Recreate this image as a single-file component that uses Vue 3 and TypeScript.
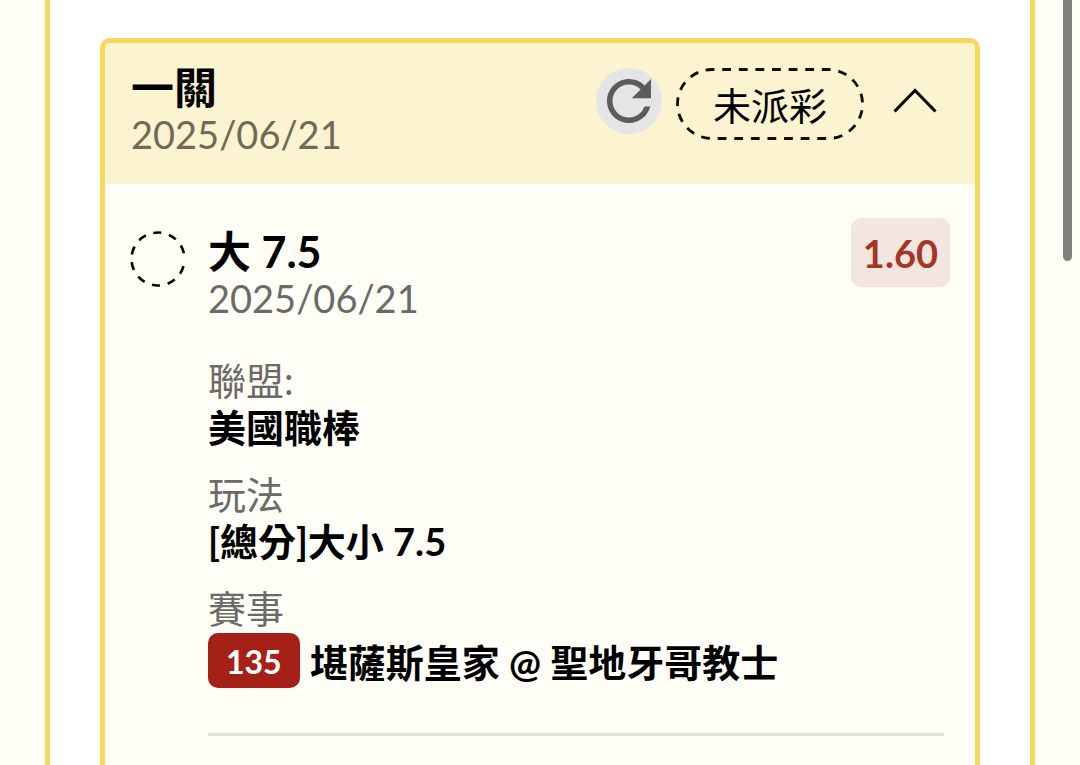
<script setup lang="ts">
import { ref } from 'vue'

interface Selection {
  title: string
  date: string
  odds: string
  league: string
  play: string
  matchNo: string
  match: string
}

const open = ref(true)
const selection: Selection = {
  title: '大 7.5',
  date: '2025/06/21',
  odds: '1.60',
  league: '美國職棒',
  play: '[總分]大小 7.5',
  matchNo: '135',
  match: '堪薩斯皇家 @ 聖地牙哥教士',
}
</script>

<template>
  <div class="page">
    <main class="panel">
      <article class="card">
        <header class="head">
          <div class="head-text">
            <h1 class="title">一關</h1>
            <p class="date">2025/06/21</p>
          </div>
          <div class="actions">
            <button class="refresh" type="button" aria-label="重新整理">
              <svg viewBox="0 0 24 24" aria-hidden="true">
                <path
                  d="M17.65 6.35A7.96 7.96 0 0 0 12 4c-4.42 0-7.99 3.58-7.99 8s3.57 8 7.99 8c3.73 0 6.84-2.55 7.73-6h-2.08A5.99 5.99 0 0 1 12 18c-3.31 0-6-2.69-6-6s2.69-6 6-6c1.66 0 3.14.69 4.22 1.78L13 11h7V4l-2.35 2.35z"
                  fill="#5c5c5e"
                />
              </svg>
            </button>
            <span class="status">
              <svg class="status-line" aria-hidden="true">
                <rect class="status-rect" x="1.5" y="1.5" rx="34.5" pathLength="54" />
              </svg>
              未派彩
            </span>
            <button class="toggle" type="button" aria-label="收合" :aria-expanded="open" @click="open = !open">
              <svg viewBox="0 0 44 26" aria-hidden="true">
                <path d="M1.5 23.5 L22 2.5 L42.5 23.5" fill="none" stroke="#0c0b06" stroke-width="3.2" />
              </svg>
            </button>
          </div>
        </header>

        <section v-if="open" class="body">
          <svg class="pending" viewBox="0 0 56 56" aria-hidden="true">
            <circle cx="28" cy="28" r="26.5" pathLength="360" fill="none" stroke="#000" stroke-width="2.6" stroke-dasharray="17.8 17" stroke-dashoffset="-16" />
          </svg>
          <div class="detail">
            <div class="top">
              <div class="top-text">
                <h2 class="title">{{ selection.title }}</h2>
                <p class="date">{{ selection.date }}</p>
              </div>
              <span class="odds">{{ selection.odds }}</span>
            </div>
            <dl class="info">
              <div>
                <dt>聯盟:</dt>
                <dd>{{ selection.league }}</dd>
              </div>
              <div>
                <dt>玩法</dt>
                <dd>{{ selection.play }}</dd>
              </div>
              <div>
                <dt>賽事</dt>
                <dd class="match">
                  <span class="number">{{ selection.matchNo }}</span>
                  <span class="teams">{{ selection.match }}</span>
                </dd>
              </div>
            </dl>
            <hr class="rule" />
          </div>
        </section>
      </article>
    </main>
    <div class="scroll-thumb"></div>
  </div>
</template>

<style>
body {
  margin: 0;
  background: #fffef6;
}
</style>

<style scoped>
.page {
  position: relative;
  box-sizing: border-box;
  display: flex;
  min-height: 100vh;
  padding: 0 45px;
  background: #fffef6;
  color: #000;
  font-family: Lato, "Noto Sans CJK TC", sans-serif;
  font-size: 38px;
  line-height: 46px;
}

.panel {
  flex: 1;
  display: flex;
  min-width: 0;
  padding: 38px 50px 0;
  background: #fff;
  border: solid #f5d95f;
  border-width: 0 5px;
}

.card {
  flex: 1;
  min-width: 0;
  background: #fffef6;
  border: 5px solid #f5d95f;
  border-bottom: 0;
  border-radius: 10px 10px 0 0;
}

.head {
  display: flex;
  justify-content: space-between;
  align-items: flex-start;
  padding: 22px 38px 27px 26px;
  background: #fcf3d0;
  border-radius: 5px 5px 0 0;
}

.title,
.date {
  margin: 0;
}

.title {
  height: 46px;
  font-size: 43px;
  font-weight: 700;
  line-height: 46px;
}

.date {
  height: 46px;
  color: #6b6a66;
}

.head .date {
  color: #6f6a58;
}

.actions {
  display: flex;
  align-items: flex-start;
  padding-top: 3px;
}

button {
  padding: 0;
  border: 0;
  background: none;
  cursor: pointer;
}

button svg {
  display: block;
  width: 100%;
  height: 100%;
}

.refresh {
  width: 66px;
  height: 66px;
  margin-right: 14px;
  border-radius: 50%;
  background: #e4e5e7;
}

.status {
  position: relative;
  box-sizing: border-box;
  height: 72px;
  padding: 0 37px;
  line-height: 74px;
}

.status-line {
  position: absolute;
  inset: 0;
  width: 100%;
  height: 100%;
}

.status-rect {
  width: calc(100% - 3px);
  height: calc(100% - 3px);
  fill: none;
  stroke: #0c0b06;
  stroke-width: 2.8;
  stroke-dasharray: 1.06 0.94;
  stroke-dashoffset: 0.77;
}

.toggle {
  width: 44px;
  height: 26px;
  margin: 20px 0 0 29px;
}

.body {
  display: flex;
  align-items: flex-start;
  gap: 22px;
  padding: 34px 25px 28px;
}

.pending {
  flex: none;
  width: 56px;
  height: 56px;
  margin-top: 13px;
}

.detail {
  flex: 1;
  min-width: 0;
}

.top {
  display: flex;
  justify-content: space-between;
  align-items: flex-start;
}

.top-text {
  padding-top: 11px;
}

.odds {
  height: 69px;
  padding: 0 12px;
  border-radius: 10px;
  background: #f3e6df;
  color: #a63529;
  font-weight: 700;
  line-height: 71px;
}

.info {
  display: flex;
  flex-direction: column;
  gap: 20px;
  margin: 36px 0 0;
  line-height: 47px;
}

.info dt {
  height: 47px;
  color: #6b6a66;
}

.info dd {
  min-height: 47px;
  margin: 0;
  font-weight: 700;
}

.info .match {
  display: flex;
  align-items: center;
  gap: 10px;
  margin-top: 1px;
}

.number {
  height: 55px;
  padding: 0 18px;
  border-radius: 10px;
  background: #a52117;
  color: #fff;
  font-size: 32px;
  line-height: 57px;
}

.teams {
  padding-top: 4px;
}

.rule {
  height: 3px;
  margin: 45px 6px 0 0;
  border: 0;
  background: #e3e2db;
}

.scroll-thumb {
  position: absolute;
  top: 0;
  right: 8px;
  width: 9px;
  height: 261px;
  border-radius: 0 0 5px 5px;
  background: #80807c;
}
</style>
